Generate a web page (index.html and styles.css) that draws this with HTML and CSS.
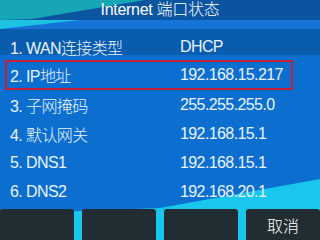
FILE: index.html
```html
<!DOCTYPE html>
<html>
<head>
<meta charset="utf-8">
<link rel="stylesheet" href="styles.css">
</head>
<body>
<div class="screen">
  <svg class="bg" width="320" height="240" viewBox="0 0 320 240">
    <rect x="0" y="0" width="320" height="240" fill="#0c6fcf"/>
    <rect x="0" y="0" width="320" height="20" fill="#0b55a0"/>
    <polygon points="0,0 145,0 32,19 0,20" fill="#17a6b6"/>
    <rect x="0" y="20" width="320" height="9" fill="#1574d6"/>
    <polygon points="0,20 80,20 0,29" fill="#1ec2e2"/>
    <rect x="0" y="29" width="320" height="26" fill="#0a5cae"/>
    <polygon points="0,240 0,214 160,208 320,179 320,240" fill="#19c6ee"/>
  </svg>
  <header class="title">Internet 端口状态</header>
  <ul class="list">
    <li class="row"><span class="label">1. WAN连接类型</span><span class="value">DHCP</span></li>
    <li class="row selected"><span class="label">2. IP地址</span><span class="value">192.168.15.217</span></li>
    <li class="row"><span class="label">3. 子网掩码</span><span class="value">255.255.255.0</span></li>
    <li class="row"><span class="label">4. 默认网关</span><span class="value">192.168.15.1</span></li>
    <li class="row"><span class="label">5. DNS1</span><span class="value">192.168.15.1</span></li>
    <li class="row"><span class="label">6. DNS2</span><span class="value">192.168.20.1</span></li>
  </ul>
  <footer class="softkeys">
    <div class="key"></div>
    <div class="key"></div>
    <div class="key"></div>
    <div class="key">取消</div>
  </footer>
</div>
</body>
</html>
```
FILE: styles.css
```css
html, body {
  margin: 0;
  padding: 0;
}
body {
  width: 320px;
  height: 240px;
  overflow: hidden;
  font-family: "Liberation Sans", "Noto Sans CJK SC", sans-serif;
  font-weight: 300;
  color: #e9f3ff;
}
.screen {
  position: relative;
  width: 320px;
  height: 240px;
  display: flex;
  flex-direction: column;
}
.bg {
  position: absolute;
  left: 0;
  top: 0;
  z-index: 0;
}
.title, .list, .softkeys {
  position: relative;
  z-index: 1;
}
.title {
  height: 20px;
  line-height: 20px;
  text-align: center;
  font-size: 16px;
  letter-spacing: -0.3px;
  color: #ffffff;
}
.list {
  list-style: none;
  margin: 12px 0 0 0;
  padding: 0;
  height: 177px;
}
.row {
  height: 29px;
  display: flex;
  align-items: center;
  font-size: 16px;
  letter-spacing: -0.6px;
  box-sizing: border-box;
  padding-left: 10px;
}
.row.selected {
  margin-left: 5px;
  width: 288px;
  height: 30px;
  margin-top: -1px;
  padding-left: 3px;
  border: 2px solid #c42038;
}
.label {
  width: 170px;
  flex: none;
}
.row.selected .label {
  width: 170px;
}
.value {
  flex: none;
}
.softkeys {
  height: 31px;
  display: grid;
  grid-template-columns: repeat(4, 1fr);
  column-gap: 8px;
}
.key {
  background: #222d33;
  border-radius: 3px 3px 0 0;
  color: #ffffff;
  font-size: 16px;
  display: flex;
  align-items: center;
  justify-content: center;
  font-family: "Noto Sans CJK SC", sans-serif;
}
```
